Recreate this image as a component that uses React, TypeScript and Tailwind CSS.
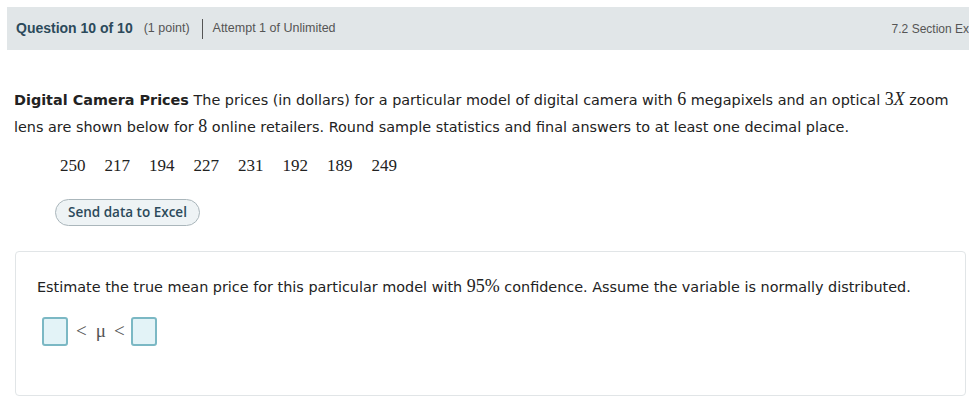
import React from 'react';

const data = [250, 217, 194, 227, 231, 192, 189, 249];

const serif = "font-['Liberation_Serif','Times_New_Roman',serif]";

const AnswerBox: React.FC = () => (
  <span className="inline-block w-[26px] h-[29px] rounded-[3px] border-2 border-[#7bb8c4] bg-[#e3f3f7]" />
);

const App: React.FC = () => {
  return (
    <div className="w-[978px] h-[402px] bg-white overflow-hidden font-['DejaVu_Sans',Verdana,sans-serif] text-[#222]">
      {/* 头部 */}
      <div className="mt-[7px] ml-[7px] mr-[9px] h-[43px] bg-[#e1e6e8] flex items-center pl-[9px] overflow-hidden font-['Liberation_Sans',Arial,sans-serif]">
        <span className="text-[14px] font-bold text-[#2c4a5b]">Question 10 of 10</span>
        <span className="ml-[11px] text-[12.5px] text-[#555]">(1 point)</span>
        <span className="ml-[12px] mr-[10px] w-px h-[20px] bg-[#555]" />
        <span className="text-[12.5px] text-[#555]">Attempt 1 of Unlimited</span>
        <span className="ml-auto text-[12px] text-[#555] whitespace-nowrap translate-x-[38px]">7.2 Section Exercises</span>
      </div>

      {/* 题目 */}
      <div className="pl-[14px] pr-[20px] pt-[37px]">
        <p className="text-[14.4px] leading-[27px]">
          <b>Digital Camera Prices</b> The prices (in dollars) for a particular model of digital camera with{' '}
          <span className={`${serif} text-[18px] leading-none`}>6</span> megapixels and an optical{' '}
          <span className={`${serif} text-[18px] leading-none`}>3<i>X</i></span> zoom lens are shown below for{' '}
          <span className={`${serif} text-[18px] leading-none`}>8</span> online retailers. Round sample statistics and final answers to at least one decimal place.
        </p>
        <div className={`${serif} text-[17px] ml-[46px] mt-[12px] flex gap-[19px]`}>
          {data.map((d, i) => (
            <span key={i}>{d}</span>
          ))}
        </div>
        <button className="mt-[20px] ml-[41px] h-[27px] px-[12px] rounded-full border border-[#aab6bb] bg-[#eef3f5] text-[13.5px] font-semibold text-[#2c4a5b] font-['Open_Sans',sans-serif]">
          Send data to Excel
        </button>
      </div>

      {/* 作答区 */}
      <div className="mt-[25px] ml-[15px] mr-[12px] h-[145px] border border-[#e1e5e7] rounded-[4px] px-[21px] pt-[25px]">
        <p className="text-[14.4px]">
          Estimate the true mean price for this particular model with{' '}
          <span className={`${serif} text-[18px] leading-none`}>95%</span> confidence. Assume the variable is normally distributed.
        </p>
        <div className={`mt-[19px] ml-[5px] flex items-center ${serif} text-[19px] text-[#555]`}>
          <AnswerBox />
          <span className="ml-[8px]">&lt;</span>
          <span className="ml-[9px]">μ</span>
          <span className="ml-[8px]">&lt;</span>
          <span className="ml-[6px] flex">
            <AnswerBox />
          </span>
        </div>
      </div>
    </div>
  );
};

export default App;
